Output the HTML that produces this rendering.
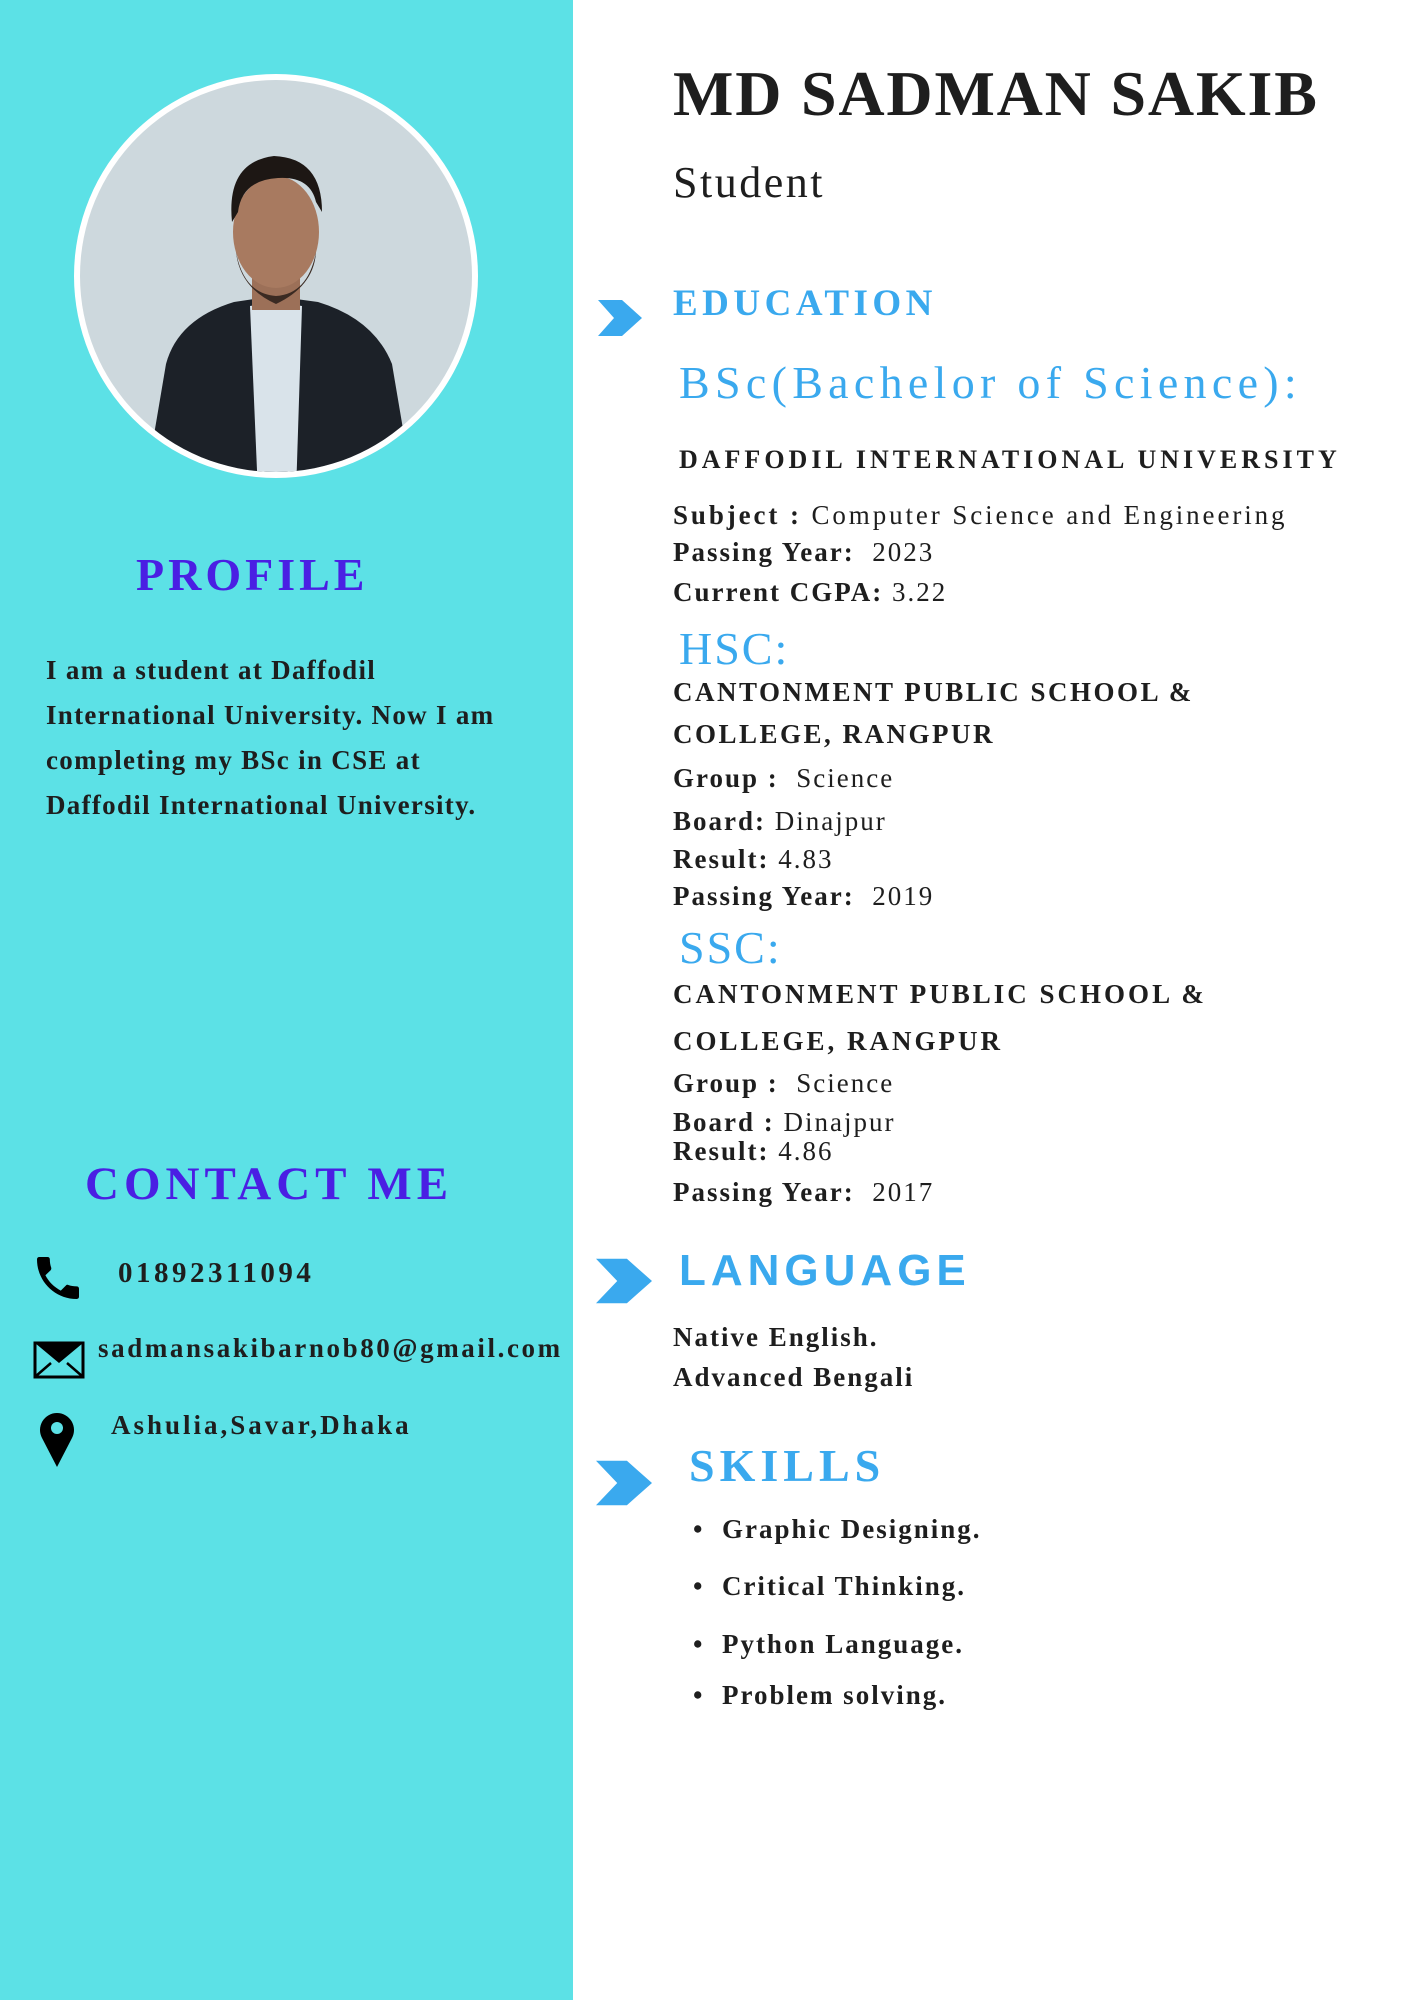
<!DOCTYPE html>
<html><head><meta charset="utf-8"><style>
*{margin:0;padding:0;box-sizing:border-box}
body{width:1414px;height:2000px;position:relative;background:#fff;font-family:"Liberation Serif",serif;overflow:hidden;color:#1e1e1e}
.l{position:absolute;background:#5ce1e6;left:0;top:0;width:573px;height:2000px}
.t{position:absolute;white-space:nowrap;line-height:1}
.b{font-weight:bold}
.blue{color:#3aa9ee}
.pur{color:#4a1fe3}
.sm{font-size:27px;letter-spacing:2px}
</style></head><body>
<div class="l"></div>
<svg style="position:absolute;left:74px;top:74px" width="404" height="404" viewBox="0 0 404 404">
<defs><clipPath id="c"><circle cx="202" cy="202" r="196"/></clipPath></defs>
<circle cx="202" cy="202" r="202" fill="#fff"/>
<g clip-path="url(#c)">
<rect width="404" height="404" fill="#cdd8dd"/>
<path d="M70 420 L92 290 Q104 245 160 228 L200 222 L244 228 Q300 245 318 290 L340 420Z" fill="#1c2128"/>
<path d="M176 232 L202 228 L228 232 L222 420 L184 420Z" fill="#d9e3ea"/>
<rect x="178" y="186" width="48" height="50" fill="#9c7058"/>
<ellipse cx="202" cy="158" rx="43" ry="56" fill="#a87a60"/>
<path d="M158 148 Q152 88 200 82 Q248 84 248 138 L242 128 Q236 102 204 104 Q168 106 164 138Z" fill="#1d1714"/>
<path d="M162 178 Q170 220 202 222 Q234 220 242 178 Q240 212 202 230 Q166 214 162 178Z" fill="#3a2a22"/>
</g>
</svg>

<div class="t b pur" style="left:136px;top:552px;font-size:46px;letter-spacing:4px">PROFILE</div>
<div class="t b" style="left:46px;top:648px;font-size:27px;line-height:45px;white-space:normal;width:540px;letter-spacing:1.3px">I am a student at Daffodil<br>International University. Now I am<br>completing my BSc in CSE at<br>Daffodil International University.</div>

<div class="t b pur" style="left:85px;top:1161px;font-size:47px;letter-spacing:5px">CONTACT ME</div>
<svg style="position:absolute;left:30px;top:1250px" width="56" height="56" viewBox="0 0 24 24"><path fill="#000" d="M6.6 10.8c1.4 2.8 3.8 5.1 6.6 6.6l2.2-2.2c.3-.3.7-.4 1-.2 1.1.4 2.3.6 3.6.6.6 0 1 .4 1 1V20c0 .6-.4 1-1 1C10.6 21 3 13.4 3 4c0-.6.4-1 1-1h3.5c.6 0 1 .4 1 1 0 1.3.2 2.5.6 3.6.1.3 0 .7-.2 1z"/></svg>
<div class="t b" style="left:118px;top:1259px;font-size:29px;letter-spacing:3.5px">01892311094</div>
<svg style="position:absolute;left:33px;top:1341px" width="52" height="38" viewBox="0 0 52 38"><rect x="2" y="2" width="48" height="34" fill="none" stroke="#000" stroke-width="3"/><path d="M2 2 L26 22 L50 2Z" fill="#000"/><path d="M3 35 L18 22 M49 35 L34 22" stroke="#000" stroke-width="2.5"/></svg>
<div class="t b" style="left:98px;top:1335px;font-size:27px;letter-spacing:2.6px">sadmansakibarnob80@gmail.com</div>
<svg style="position:absolute;left:38px;top:1410px" width="38" height="58" viewBox="0 0 38 58"><path d="M19 57 L4 28 A17 17 0 1 1 34 28Z" fill="#000"/><circle cx="19" cy="18" r="6" fill="#5ce1e6"/></svg>
<div class="t b" style="left:111px;top:1412px;font-size:27px;letter-spacing:3px">Ashulia,Savar,Dhaka</div>

<div class="t b" style="left:673px;top:62px;font-size:64px;letter-spacing:1.8px">MD SADMAN SAKIB</div>
<div class="t" style="left:673px;top:161px;font-size:44px;letter-spacing:2.5px">Student</div>

<svg style="position:absolute;left:598px;top:300px" width="44" height="36" viewBox="0 0 44 36"><path d="M0 0 H24 L44 18 L24 36 H0 L16 18Z" fill="#3aa9ee"/></svg>
<div class="t b blue" style="left:673px;top:285px;font-size:37px;letter-spacing:4.5px">EDUCATION</div>
<div class="t blue" style="left:679px;top:360px;font-size:46px;letter-spacing:5.3px">BSc(Bachelor of Science):</div>
<div class="t b" style="left:679px;top:447px;font-size:26px;letter-spacing:4px">DAFFODIL INTERNATIONAL UNIVERSITY</div>
<div class="t sm" style="left:673px;top:502px;letter-spacing:2.9px"><b>Subject :</b> Computer Science and Engineering</div>
<div class="t sm" style="left:673px;top:539px"><b>Passing Year:</b>&nbsp; 2023</div>
<div class="t sm" style="left:673px;top:579px"><b>Current CGPA:</b> 3.22</div>
<div class="t blue" style="left:679px;top:626px;font-size:46px;letter-spacing:2px">HSC:</div>
<div class="t b sm" style="left:673px;top:679px;letter-spacing:2.5px">CANTONMENT PUBLIC SCHOOL &amp;</div>
<div class="t b sm" style="left:673px;top:721px;letter-spacing:2.5px">COLLEGE, RANGPUR</div>
<div class="t sm" style="left:673px;top:765px"><b>Group :</b>&nbsp; Science</div>
<div class="t sm" style="left:673px;top:808px"><b>Board:</b> Dinajpur</div>
<div class="t sm" style="left:673px;top:846px"><b>Result:</b> 4.83</div>
<div class="t sm" style="left:673px;top:883px"><b>Passing Year:</b>&nbsp; 2019</div>
<div class="t blue" style="left:679px;top:925px;font-size:46px;letter-spacing:2px">SSC:</div>
<div class="t b sm" style="left:673px;top:981px;letter-spacing:3px">CANTONMENT PUBLIC SCHOOL &amp;</div>
<div class="t b sm" style="left:673px;top:1028px;letter-spacing:3px">COLLEGE, RANGPUR</div>
<div class="t sm" style="left:673px;top:1070px"><b>Group :</b>&nbsp; Science</div>
<div class="t sm" style="left:673px;top:1109px"><b>Board :</b> Dinajpur</div>
<div class="t sm" style="left:673px;top:1138px"><b>Result:</b> 4.86</div>
<div class="t sm" style="left:673px;top:1179px"><b>Passing Year:</b>&nbsp; 2017</div>

<svg style="position:absolute;left:596px;top:1258px" width="56" height="46" viewBox="0 0 58 46"><path d="M0 0 H32 L58 23 L32 46 H0 L22 23Z" fill="#3aa9ee"/></svg>
<div class="t b blue" style="left:679px;top:1249px;font-family:'Liberation Sans',sans-serif;font-size:44px;letter-spacing:5px">LANGUAGE</div>
<div class="t b sm" style="left:673px;top:1324px">Native English.</div>
<div class="t b sm" style="left:673px;top:1364px">Advanced Bengali</div>

<svg style="position:absolute;left:596px;top:1460px" width="56" height="46" viewBox="0 0 58 46"><path d="M0 0 H32 L58 23 L32 46 H0 L22 23Z" fill="#3aa9ee"/></svg>
<div class="t b blue" style="left:689px;top:1443px;font-size:46px;letter-spacing:5px">SKILLS</div>
<div class="t b sm" style="left:693px;top:1516px">•&nbsp; Graphic Designing.</div>
<div class="t b sm" style="left:693px;top:1573px">•&nbsp; Critical Thinking.</div>
<div class="t b sm" style="left:693px;top:1631px">•&nbsp; Python Language.</div>
<div class="t b sm" style="left:693px;top:1682px">•&nbsp; Problem solving.</div>
</body></html>
